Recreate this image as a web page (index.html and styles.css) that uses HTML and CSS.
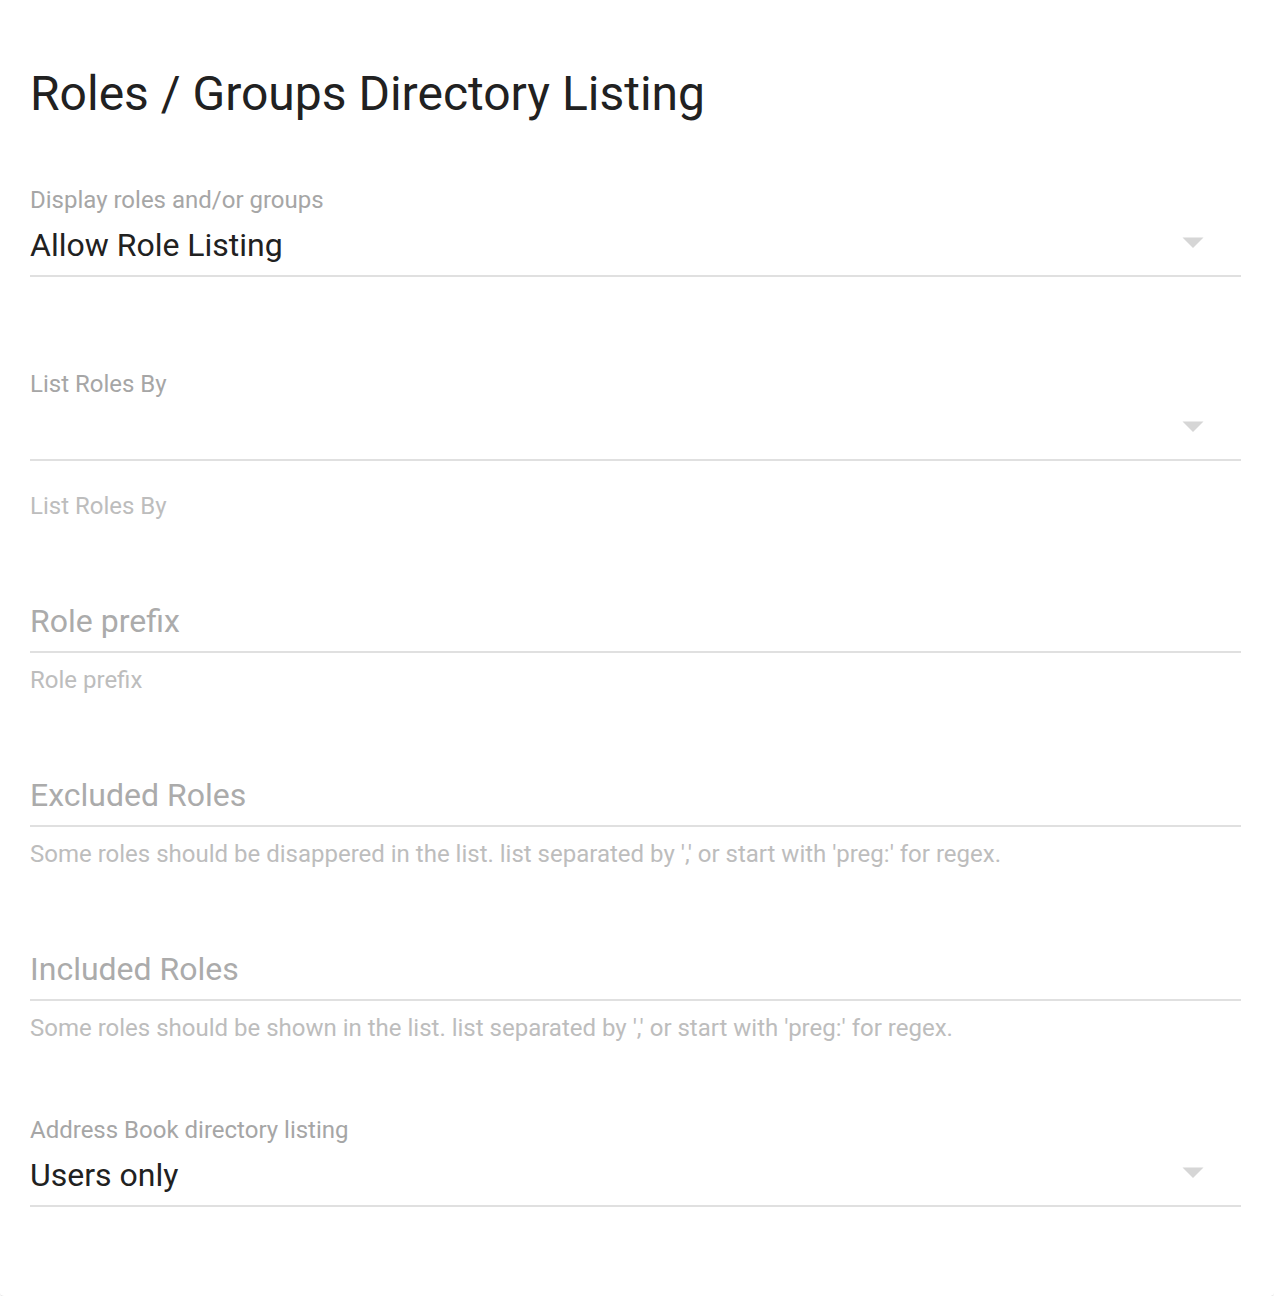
FILE: index.html
```html
<!DOCTYPE html>
<html lang="en">
<head>
<meta charset="utf-8">
<title>Roles / Groups Directory Listing</title>
<link rel="stylesheet" href="styles.css">
</head>
<body>
<div class="card">
  <h1 class="title">Roles / Groups Directory Listing</h1>

  <div class="field f-first">
    <div class="label">Display roles and/or groups</div>
    <div class="control">
      <span class="value">Allow Role Listing</span>
      <svg class="arrow" width="22" height="11" viewBox="0 0 22 11"><path d="M0.5 0.5 L21.5 0.5 L11 11 Z" fill="#d6d6d6"/></svg>
    </div>
  </div>

  <div class="field f-second">
    <div class="label">List Roles By</div>
    <div class="control">
      <span class="value"></span>
      <svg class="arrow" width="22" height="11" viewBox="0 0 22 11"><path d="M0.5 0.5 L21.5 0.5 L11 11 Z" fill="#d6d6d6"/></svg>
    </div>
  </div>
  <div class="helper helper-select">List Roles By</div>

  <div class="field f-text">
    <div class="label"></div>
    <div class="control">
      <span class="value placeholder">Role prefix</span>
    </div>
  </div>
  <div class="helper">Role prefix</div>

  <div class="field f-text">
    <div class="label"></div>
    <div class="control">
      <span class="value placeholder">Excluded Roles</span>
    </div>
  </div>
  <div class="helper">Some roles should be disappered in the list. list separated by ',' or start with 'preg:' for regex.</div>

  <div class="field f-text">
    <div class="label"></div>
    <div class="control">
      <span class="value placeholder">Included Roles</span>
    </div>
  </div>
  <div class="helper">Some roles should be shown in the list. list separated by ',' or start with 'preg:' for regex.</div>

  <div class="field f-last">
    <div class="label">Address Book directory listing</div>
    <div class="control">
      <span class="value">Users only</span>
      <svg class="arrow" width="22" height="11" viewBox="0 0 22 11"><path d="M0.5 0.5 L21.5 0.5 L11 11 Z" fill="#d6d6d6"/></svg>
    </div>
  </div>
</div>
</body>
</html>
```

FILE: styles.css
```css
html, body {
  margin: 0;
  padding: 0;
  background: #ffffff;
}

body {
  font-family: Roboto, "Noto Sans", "Liberation Sans", sans-serif;
  color: #212121;
}

.card {
  box-sizing: border-box;
  width: 1274px;
  margin: 0;
  padding: 0 33px 89px 30px;
  background: #ffffff;
  border-radius: 0 0 4px 4px;
  box-shadow: 0 2px 2px -1px rgba(0, 0, 0, 0.22);
}

.title {
  margin: 0;
  padding-top: 66px;
  font-size: 48px;
  line-height: 56px;
  font-weight: 400;
  color: #212121;
}

.field {
  display: flex;
  flex-direction: column;
}

.f-first { margin-top: 63px; }
.f-second { margin-top: 92px; }
.f-text { margin-top: 41px; }
.f-last { margin-top: 73px; }

.label {
  height: 30px;
  font-size: 24px;
  line-height: 30px;
  color: #a6a6a6;
  white-space: nowrap;
}

.control {
  display: flex;
  align-items: center;
  padding: 14px 0 14px 0;
  height: 32px;
  border-bottom: 2px solid #e0e0e0;
}

.value {
  flex: 1;
  font-size: 32px;
  line-height: 32px;
  color: #212121;
  white-space: nowrap;
}

.value.placeholder {
  color: #ababab;
}

.arrow {
  display: block;
  margin-right: 37px;
  margin-top: -5px;
  flex: none;
}

.helper {
  margin-top: 13px;
  font-size: 24px;
  line-height: 28px;
  color: #bdbdbd;
  white-space: nowrap;
}

.helper-select {
  margin-top: 31px;
}
```
